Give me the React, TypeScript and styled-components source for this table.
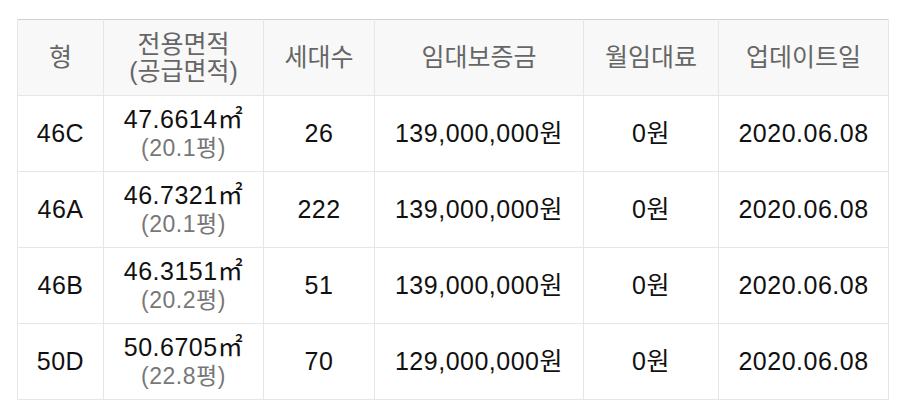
import styled, { createGlobalStyle } from "styled-components";

const GlobalStyle = createGlobalStyle`
  body {
    margin: 0;
    background: #fff;
    font-family: "Liberation Sans", "Noto Sans CJK KR", sans-serif;
  }
`;

const Wrap = styled.div`
  padding: 19px 9px 0 17px;
`;

const Table = styled.table`
  width: 871px;
  border-collapse: collapse;
  table-layout: fixed;
  border-top: 1px solid #cfcfcf;
`;

const HeadCell = styled.th`
  height: 75px;
  padding: 0;
  background: #f8f8f8;
  color: #666;
  font-size: 25px;
  font-weight: normal;
  line-height: 27px;
  text-align: center;
  vertical-align: middle;
  border: 1px solid #e6e6e6;
  border-top: none;
`;

const Cell = styled.td`
  height: 75px;
  padding: 0;
  color: #111;
  font-size: 25px;
  line-height: 29px;
  letter-spacing: 0.5px;
  text-align: center;
  vertical-align: middle;
  border: 1px solid #e6e6e6;
`;

const Sub = styled.div`
  color: #777;
  font-size: 23px;
`;

const cols = [86, 160, 111, 209, 135, 170];

const rows = [
  { type: "46C", area: "47.6614", py: "20.1", count: "26", deposit: "139,000,000" },
  { type: "46A", area: "46.7321", py: "20.1", count: "222", deposit: "139,000,000" },
  { type: "46B", area: "46.3151", py: "20.2", count: "51", deposit: "139,000,000" },
  { type: "50D", area: "50.6705", py: "22.8", count: "70", deposit: "129,000,000" },
];

const App = () => {
  return (
    <Wrap>
      <GlobalStyle />
      <Table>
        <colgroup>
          {cols.map((w, i) => (
            <col key={i} width={w} />
          ))}
        </colgroup>
        <thead>
          <tr>
            <HeadCell>형</HeadCell>
            <HeadCell>
              전용면적
              <br />
              (공급면적)
            </HeadCell>
            <HeadCell>세대수</HeadCell>
            <HeadCell>임대보증금</HeadCell>
            <HeadCell>월임대료</HeadCell>
            <HeadCell>업데이트일</HeadCell>
          </tr>
        </thead>
        <tbody>
          {rows.map((r) => (
            <tr key={r.type}>
              <Cell>{r.type}</Cell>
              <Cell>
                <div>{r.area}㎡</div>
                <Sub>({r.py}평)</Sub>
              </Cell>
              <Cell>{r.count}</Cell>
              <Cell>{r.deposit}원</Cell>
              <Cell>0원</Cell>
              <Cell>2020.06.08</Cell>
            </tr>
          ))}
        </tbody>
      </Table>
    </Wrap>
  );
};

export default App;
